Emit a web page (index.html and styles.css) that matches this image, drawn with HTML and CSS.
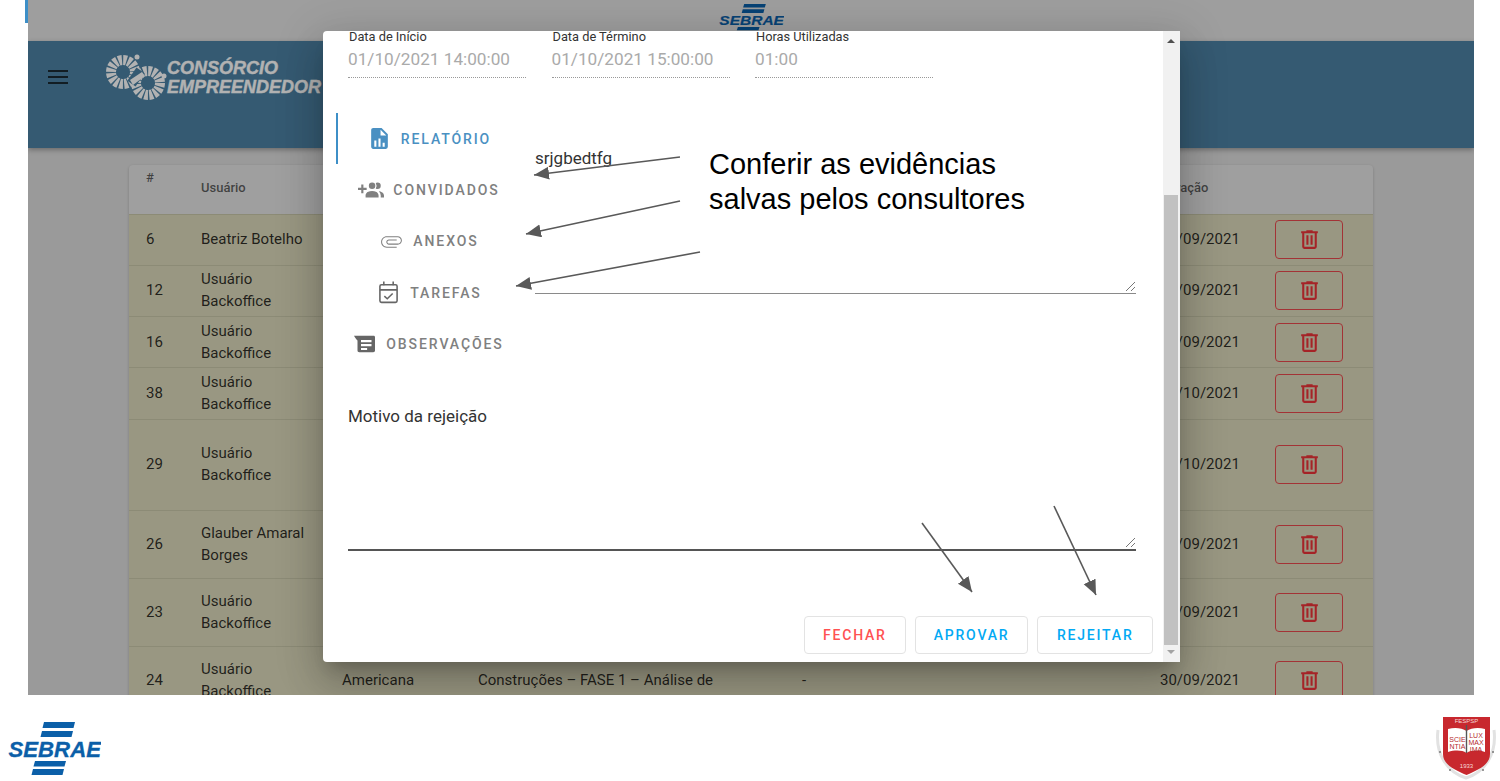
FILE: index.html
```html
<!DOCTYPE html>
<html lang="pt-BR">

<head>
    <meta charset="UTF-8">
    <meta name="viewport" content="width=device-width, initial-scale=1.0">
    <title>Consórcio Empreendedor</title>
    <link rel="stylesheet" href="styles.css">
</head>

<body>
    <svg class="sprite" width="0" height="0">
        <symbol id="trash" viewBox="0 0 24 24">
            <path d="M9,3V4H4V6H5V19A2,2 0 0,0 7,21H17A2,2 0 0,0 19,19V6H20V4H15V3H9M7,6H17V19H7V6M9,8V17H11V8H9M13,8V17H15V8H13Z" />
        </symbol>
        <symbol id="grip" viewBox="0 0 11 11">
            <path d="M1 10 L10 1 M6 10 L10 6" fill="none" stroke="#777" stroke-width="1" />
        </symbol>
        <symbol id="bars-up" viewBox="0 0 93 16">
            <polygon points="36,0 67,0 65.500,6 34.500,6" />
            <polygon points="34,9 65,9 63.500,15 32.500,15" />
        </symbol>
    </svg>

    <div class="slide">
        <div class="screen">
            <div class="topband">
                <svg class="logo-top" viewBox="0 0 93 54" preserveAspectRatio="none">
                    <use href="#bars-up" width="93" height="16" />
                    <text x="0.500" y="35" class="sebrae-word">SEBRAE</text>
                    <polygon points="27,39 58,39 56.500,44.500 25.500,44.500" />
                    <polygon points="25,47 56,47 54.500,53 23.500,53" />
                </svg>
            </div>

            <header class="appbar">
                <div class="menu-btn"><span></span><span></span><span></span></div>
                <svg class="brand-mark" width="64" height="60" viewBox="0 0 64 60">
                    <g fill="none" stroke="#fff">
                        <circle cx="19" cy="21" r="12" stroke-width="10" stroke-dasharray="3.400 1.300" />
                        <circle cx="44" cy="32" r="12" stroke-width="10" stroke-dasharray="3.400 1.300" />
                    </g>
                    <rect x="27" y="18" width="10" height="16" fill="#4c82a4" transform="rotate(35 32 26)" />
                    <polygon points="26,29 38,21 41,25 29,34" fill="#fff" />
                    <circle cx="33" cy="6" r="2.500" fill="#fff" />
                    <circle cx="60" cy="25" r="2.500" fill="#fff" />
                </svg>
                <div class="brand-name">
                    <span>CONSÓRCIO</span>
                    <span>EMPREENDEDOR</span>
                </div>
            </header>

            <div class="table-card">
                <table class="grid">
                    <colgroup>
                        <col class="c-id">
                        <col class="c-user">
                        <col class="c-city">
                        <col class="c-title">
                        <col class="c-note">
                        <col class="c-date">
                        <col class="c-act">
                    </colgroup>
                    <thead>
                        <tr>
                            <th class="th-id">#</th>
                            <th>Usuário</th>
                            <th></th>
                            <th></th>
                            <th></th>
                            <th>Geração</th>
                            <th></th>
                        </tr>
                    </thead>
                    <tbody>
                        <tr>
                            <td>6</td>
                            <td>Beatriz Botelho</td>
                            <td></td><td></td><td></td>
                            <td>30/09/2021</td>
                            <td><button class="del"><svg><use href="#trash" /></svg></button></td>
                        </tr>
                        <tr>
                            <td>12</td>
                            <td>Usuário Backoffice</td>
                            <td></td><td></td><td></td>
                            <td>30/09/2021</td>
                            <td><button class="del"><svg><use href="#trash" /></svg></button></td>
                        </tr>
                        <tr>
                            <td>16</td>
                            <td>Usuário Backoffice</td>
                            <td></td><td></td><td></td>
                            <td>30/09/2021</td>
                            <td><button class="del"><svg><use href="#trash" /></svg></button></td>
                        </tr>
                        <tr>
                            <td>38</td>
                            <td>Usuário Backoffice</td>
                            <td></td><td></td><td></td>
                            <td>01/10/2021</td>
                            <td><button class="del"><svg><use href="#trash" /></svg></button></td>
                        </tr>
                        <tr class="row-tall">
                            <td>29</td>
                            <td>Usuário Backoffice</td>
                            <td></td><td></td><td></td>
                            <td>01/10/2021</td>
                            <td><button class="del"><svg><use href="#trash" /></svg></button></td>
                        </tr>
                        <tr class="row-mid">
                            <td>26</td>
                            <td>Glauber Amaral Borges</td>
                            <td></td><td></td><td></td>
                            <td>30/09/2021</td>
                            <td><button class="del"><svg><use href="#trash" /></svg></button></td>
                        </tr>
                        <tr class="row-mid">
                            <td>23</td>
                            <td>Usuário Backoffice</td>
                            <td></td><td></td><td></td>
                            <td>30/09/2021</td>
                            <td><button class="del"><svg><use href="#trash" /></svg></button></td>
                        </tr>
                        <tr class="row-mid">
                            <td>24</td>
                            <td>Usuário Backoffice</td>
                            <td>Americana</td>
                            <td>Construções – FASE 1 – Análise de</td>
                            <td>-</td>
                            <td>30/09/2021</td>
                            <td><button class="del"><svg><use href="#trash" /></svg></button></td>
                        </tr>
                    </tbody>
                </table>
            </div>

            <div class="backdrop"></div>

            <div class="modal">
                <div class="modal-main">
                    <div class="fields">
                        <div class="field">
                            <label>Data de Início</label>
                            <div class="field-value">01/10/2021 14:00:00</div>
                        </div>
                        <div class="field">
                            <label>Data de Término</label>
                            <div class="field-value">01/10/2021 15:00:00</div>
                        </div>
                        <div class="field">
                            <label>Horas Utilizadas</label>
                            <div class="field-value">01:00</div>
                        </div>
                    </div>

                    <div class="tabs-row">
                        <div class="tabs">
                            <div class="tab active">
                                <svg class="tab-icon" viewBox="0 0 24 24"><path d="M13,9H18.5L13,3.5V9M6,2H14L20,8V20A2,2 0 0,1 18,22H6C4.89,22 4,21.1 4,20V4C4,2.89 4.89,2 6,2M7,20H9V14H7V20M11,20H13V12H11V20M15,20H17V16H15V20Z" /></svg>
                                RELATÓRIO
                            </div>
                            <div class="tab">
                                <svg class="tab-icon icon-guests" viewBox="0 0 24 24"><path d="M19 17V19H7V17S7 13 13 13 19 17 19 17M16 8A3 3 0 1 0 13 11A3 3 0 0 0 16 8M19.2 13.06A5.6 5.6 0 0 1 21 17V19H24V17S24 13.55 19.2 13.06M18 5A2.91 2.91 0 0 0 16.39 5.5A5 5 0 0 1 16.39 10.5A2.91 2.91 0 0 0 18 11A3 3 0 0 0 18 5M8 10H5V7H3V10H0V12H3V15H5V12H8Z" /></svg>
                                CONVIDADOS
                            </div>
                            <div class="tab">
                                <svg class="tab-icon" viewBox="0 0 24 24"><path d="M2 12.5C2 9.46 4.46 7 7.5 7H18c2.21 0 4 1.79 4 4s-1.790 4-4 4H9.5C8.120 15 7 13.880 7 12.500S8.120 10 9.500 10H17v1H9.500C8.700 11 8 11.700 8 12.500S8.700 14 9.500 14H18c1.650 0 3-1.350 3-3s-1.350-3-3-3H7.500C5.010 8 3 10.010 3 12.500S5.010 17 7.500 17H17v1H7.500C4.460 18 2 15.540 2 12.500z" /></svg>
                                ANEXOS
                            </div>
                            <div class="tab">
                                <svg class="tab-icon icon-tasks" viewBox="0 0 24 24">
                                    <rect x="3.750" y="4.500" width="16.500" height="17" rx="1.500" />
                                    <path d="M3.750 9.500H20.250M7.500 1.500V5M16.500 1.500V5M8 15.500L10.800 18 16 13" />
                                </svg>
                                TAREFAS
                            </div>
                            <div class="tab tab-notes">
                                <svg class="icon-notes" viewBox="0 0 24 24"><path fill-rule="evenodd" d="M0 3H22.500C23.300 3 24 3.700 24 4.500V20C24 21.100 23.100 22 22 22H6C4.900 22 4 21.100 4 20V8.500C2.500 7 1 5 0 3ZM8 8V10.500H20V8ZM8 12.500V15H20V12.500ZM8 17V19.500H15V17Z" /></svg>
                                OBSERVAÇÕES
                            </div>
                        </div>
                        <div class="report">
                            <p>srjgbedtfg</p>
                            <svg class="grip"><use href="#grip" /></svg>
                        </div>
                    </div>

                    <div class="reject">
                        <label>Motivo da rejeição</label>
                        <svg class="grip"><use href="#grip" /></svg>
                    </div>

                    <div class="actions">
                        <button class="btn btn-close">FECHAR</button>
                        <button class="btn">APROVAR</button>
                        <button class="btn btn-reject">REJEITAR</button>
                    </div>
                </div>

                <div class="scrollbar">
                    <span class="arrow-up"></span>
                    <div class="thumb"></div>
                    <span class="arrow-down"></span>
                </div>
            </div>
        </div>

        <footer class="footer">
            <svg class="logo-sebrae" viewBox="0 0 93 54">
                <use href="#bars-up" width="93" height="16" />
                <text x="0.500" y="35" class="sebrae-word">SEBRAE</text>
                <polygon points="27,39 58,39 56.500,44.500 25.500,44.500" />
                <polygon points="25,47 56,47 54.500,53 23.500,53" />
            </svg>
            <svg class="crest" width="62" height="64" viewBox="0 0 62 64">
                <path d="M3 14 C0 38 12 56 31 62 C50 56 62 38 59 14" fill="none" stroke="#e2e2e2" stroke-width="3" />
                <circle cx="5" cy="36" r="1" fill="#777" />
                <circle cx="15" cy="54" r="1" fill="#777" />
                <circle cx="48" cy="54" r="1" fill="#777" />
                <circle cx="58" cy="36" r="1" fill="#777" />
                <path d="M8 1 H55 V38 C55 49 43 54 31.500 59 C20 54 8 49 8 38 Z" fill="#c8282e" />
                <text x="31.500" y="7" class="crest-top">FESPSP</text>
                <path d="M13 13 C20 11 27 12 31.500 15 C36 12 43 11 50 13 V36 C43 34 36 34 31.500 37 C27 34 20 34 13 36 Z" fill="#fff" />
                <rect x="30.800" y="9" width="1.400" height="28" fill="#555" />
                <text x="22.500" y="25.500" class="crest-word">SCIE</text>
                <text x="22.500" y="33" class="crest-word">NTIA</text>
                <text x="41" y="22" class="crest-word">LUX</text>
                <text x="41" y="29" class="crest-word">MAX</text>
                <text x="41" y="35.500" class="crest-word">IMA</text>
                <text x="31.500" y="52" class="crest-year">1933</text>
            </svg>
        </footer>

        <svg class="marks" width="1500" height="781" viewBox="0 0 1500 781">
            <defs>
                <marker id="head" markerUnits="userSpaceOnUse" markerWidth="16" markerHeight="14" refX="15" refY="6.500" orient="auto">
                    <polygon points="0,0 15,6.500 0,13" fill="#595959" />
                </marker>
            </defs>
            <g stroke="#595959" stroke-width="1.600" marker-end="url(#head)">
                <line x1="680" y1="157" x2="534" y2="175" />
                <line x1="680" y1="201" x2="526" y2="234" />
                <line x1="700" y1="252" x2="516" y2="286" />
                <line x1="922" y1="523" x2="972" y2="592" />
                <line x1="1054" y1="506" x2="1096" y2="595" />
            </g>
        </svg>
        <p class="note">Conferir as evidências<br>salvas pelos consultores</p>
    </div>
</body>

</html>
```
FILE: styles.css
```css
* {
    margin: 0;
    padding: 0;
    box-sizing: border-box;
}

body {
    background-color: white;
    font-family: Roboto, sans-serif;
    color: #212121;
    overflow: hidden;
}

.sprite {
    position: absolute;
}

.sebrae-word {
    font-family: "Liberation Sans", sans-serif;
    font-weight: 700;
    font-style: italic;
    font-size: 22.200px;
    stroke: currentColor;
    stroke-width: .3px;
}

.slide {
    position: relative;
    width: 1500px;
    height: 781px;
}

.slide::before {
    content: "";
    position: absolute;
    left: 25px;
    top: 0;
    width: 3px;
    height: 23px;
    background-color: #3d8fc7;
}

.screen {
    position: relative;
    width: 1446px;
    height: 695px;
    margin-left: 28px;
    overflow: hidden;
    background-color: #ddd;
}

.topband {
    height: 41px;
    display: flex;
    justify-content: center;
    background-color: #e2e2e2;
    padding-top: 4px;
}

.logo-top {
    width: 65px;
    height: 32px;
    color: #0b5fa8;
    fill: #0b5fa8;
}

.appbar {
    height: 107px;
    display: flex;
    align-items: flex-start;
    background-color: #4c82a4;
    box-shadow: 0 2px 5px rgba(0, 0, 0, .3);
    position: relative;
    padding-left: 20px;
}

.menu-btn {
    width: 20px;
    margin-top: 29px;
    display: flex;
    flex-direction: column;
    gap: 4px;
}

.menu-btn span {
    height: 2px;
    background-color: #1b2a33;
}

.brand-mark {
    margin-left: 36px;
    margin-top: 10px;
}

.brand-name {
    display: flex;
    flex-direction: column;
    margin-left: -1px;
    margin-top: 18px;
    font-family: "Liberation Sans", sans-serif;
    font-weight: 700;
    font-style: italic;
    font-size: 18px;
    line-height: 19px;
    color: #fff;
    -webkit-text-stroke: .4px #fff;
}

.table-card {
    margin: 17px 101px 0;
    border-radius: 4px 4px 0 0;
    background-color: #e4e4e4;
    box-shadow: 0 1px 3px rgba(0, 0, 0, .2);
}

.grid {
    width: 1244px;
    table-layout: fixed;
    border-collapse: collapse;
    font-size: 15px;
}

.c-id { width: 72px; }
.c-user { width: 141px; }
.c-city { width: 136px; }
.c-title { width: 324px; }
.c-note { width: 358px; }
.c-date { width: 115px; }
.c-act { width: 98px; }

.grid th {
    height: 49px;
    padding-bottom: 4px;
    text-align: left;
    font-size: 13px;
    font-weight: 500;
    color: rgba(0, 0, 0, .6);
}

.grid .th-id {
    vertical-align: top;
    padding: 5px 0 0 17px;
}

.grid td {
    line-height: 22px;
    padding-right: 10px;
    padding-bottom: 1px;
    color: rgba(0, 0, 0, .8);
    border-top: 1px solid #c9c7aa;
}

.grid td:first-child {
    padding-left: 17px;
}

.grid td:nth-child(2) {
    padding-right: 30px;
}

.grid td:last-child {
    padding-bottom: 0;
}

.grid tbody tr {
    height: 51.300px;
    background-color: #dcd9bb;
}

.grid .row-tall {
    height: 91px;
}

.grid .row-mid {
    height: 68px;
}

.del {
    display: flex;
    align-items: center;
    justify-content: center;
    width: 68px;
    height: 39px;
    background: transparent;
    border: 1px solid #ea4a4e;
    border-radius: 4px;
}

.del svg {
    width: 25px;
    height: 25px;
    fill: #ec3338;
}

.backdrop {
    position: absolute;
    inset: 0;
    background-color: rgba(0, 0, 0, .3);
}

.modal {
    position: absolute;
    left: 295px;
    top: 31px;
    width: 857px;
    height: 631px;
    display: flex;
    background-color: white;
    border-radius: 4px 0 4px 4px;
    box-shadow: 0 11px 15px -7px rgba(0, 0, 0, .2), 0 24px 38px 3px rgba(0, 0, 0, .14), 0 9px 46px 8px rgba(0, 0, 0, .12);
}

.modal-main {
    flex: 1;
    display: flex;
    flex-direction: column;
    padding-left: 13px;
}

.fields {
    display: flex;
    gap: 25.500px;
    margin-left: 12px;
}

.field {
    width: 178px;
    height: 47px;
    border-bottom: 1px dotted #999;
}

.field label {
    display: block;
    font-size: 12.800px;
    line-height: 12px;
    padding-left: 1px;
    color: #333;
}

.field-value {
    margin-top: 6px;
    font-size: 17.200px;
    line-height: 20px;
    color: #aaa;
}

.tabs-row {
    display: flex;
    margin-top: 35px;
}

.tabs {
    width: 184px;
    margin-right: 15px;
}

.tab {
    height: 51.300px;
    display: flex;
    align-items: center;
    justify-content: center;
    gap: 9px;
    font-size: 14px;
    font-weight: 500;
    letter-spacing: 1.900px;
    color: #808080;
    border-left: 2px solid transparent;
}

.tab.active {
    color: #4a90c2;
    border-left-color: #3d8fc7;
}

.tab-icon {
    width: 25px;
    height: 25px;
    fill: currentColor;
}

.icon-guests {
    width: 26px;
    height: 26px;
}

.icon-tasks {
    fill: none;
    stroke: #666;
    stroke-width: 1.500;
}

.icon-notes {
    width: 21px;
    height: 21px;
    fill: #666;
}

.tab-notes {
    gap: 11px;
}

.report {
    position: relative;
    width: 601px;
    height: 181px;
    padding-top: 35px;
    border-bottom: 1px solid #8a8a8a;
}

.report p {
    font-size: 17px;
    line-height: 20px;
    color: #333;
}

.grip {
    position: absolute;
    right: 0;
    bottom: 1px;
    width: 11px;
    height: 11px;
}

.reject {
    position: relative;
    width: 788px;
    height: 145px;
    margin: 37px 0 0 12px;
    border-bottom: 2px solid #555;
}

.reject label {
    font-size: 17px;
    line-height: 20px;
    color: #333;
}

.actions {
    display: flex;
    justify-content: flex-end;
    gap: 9px;
    margin-top: auto;
    padding: 0 10px 8px 0;
}

.btn {
    height: 38px;
    padding: 0 18px;
    background-color: white;
    border: 1px solid #e3e3e3;
    border-radius: 4px;
    font-family: Roboto, sans-serif;
    font-size: 14px;
    font-weight: 500;
    letter-spacing: 1.800px;
    color: #03a9f4;
}

.btn-close {
    color: #ff5252;
}

.btn-reject {
    padding: 0 18.500px;
}

.scrollbar {
    position: relative;
    width: 17px;
    background-color: #f1f1f1;
}

.thumb {
    position: absolute;
    left: 1px;
    right: 2px;
    top: 164px;
    height: 450px;
    background-color: #c1c1c1;
}

.arrow-up,
.arrow-down {
    position: absolute;
    left: 4px;
    border-left: 4px solid transparent;
    border-right: 4px solid transparent;
}

.arrow-up {
    top: 8px;
    border-bottom: 4px solid #505050;
}

.arrow-down {
    bottom: 8px;
    border-top: 4px solid #a3a3a3;
}

.footer {
    height: 86px;
    display: flex;
    justify-content: space-between;
    align-items: flex-start;
    padding: 21px 3px 0 8px;
}

.logo-sebrae {
    width: 93px;
    height: 54px;
    margin-top: 6px;
    color: #0b5fa8;
    fill: #0b5fa8;
}

.crest-top,
.crest-word,
.crest-year {
    font-family: "Liberation Sans", sans-serif;
    text-anchor: middle;
}

.crest-top {
    font-size: 6px;
    fill: #f6d9d9;
}

.crest-word {
    font-size: 7px;
    fill: #b52a2f;
}

.crest-year {
    font-size: 6px;
    fill: #f6d9d9;
}

.marks {
    position: absolute;
    left: 0;
    top: 0;
    pointer-events: none;
}

.note {
    position: absolute;
    left: 709px;
    top: 147px;
    font-family: "Liberation Sans", sans-serif;
    font-size: 29px;
    line-height: 35px;
    color: black;
}
```
